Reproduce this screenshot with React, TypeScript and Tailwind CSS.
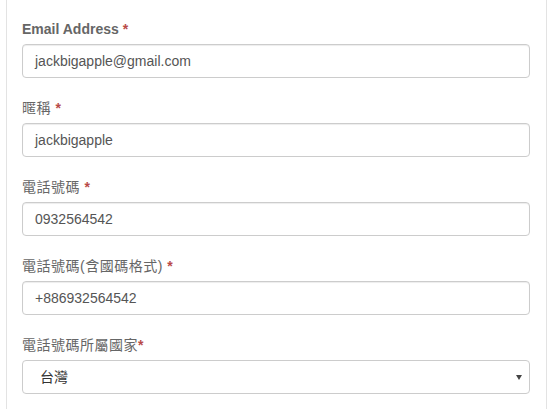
import React from "react";

const font = { fontFamily: '"Liberation Sans", Arial, "Noto Sans CJK TC", sans-serif' };

function Label({ text, bold, space = true }: { text: string; bold?: boolean; space?: boolean }) {
  return (
    <label
      className={`block h-[20px] leading-[20px] text-[14px] mb-[5px] text-[#666] ${bold ? "font-bold" : "font-normal tracking-[0.5px]"}`}
    >
      {text}
      {space ? " " : ""}
      <span className="text-[#b94a48] font-bold">*</span>
    </label>
  );
}

function Input({ value }: { value: string }) {
  return (
    <div className="h-[34px] w-[508px] border border-[#ccc] rounded-[4px] px-[12px] flex items-center text-[14px] text-[#555] bg-white shadow-[inset_0_1px_1px_rgba(0,0,0,0.075)]">
      {value}
    </div>
  );
}

export default function App() {
  return (
    <div className="w-[551px] h-[409px] bg-white overflow-hidden" style={font}>
      <div className="ml-[6px] w-[541px] h-full border-l border-r border-[#e3e3e3] pl-[15px] pt-[19px]">
        <div className="mb-[20px]">
          <Label text="Email Address" bold />
          <Input value="jackbigapple@gmail.com" />
        </div>
        <div className="mb-[20px]">
          <Label text="暱稱" />
          <Input value="jackbigapple" />
        </div>
        <div className="mb-[20px]">
          <Label text="電話號碼" />
          <Input value="0932564542" />
        </div>
        <div className="mb-[20px]">
          <Label text="電話號碼(含國碼格式)" />
          <Input value="+886932564542" />
        </div>
        <div>
          <Label text="電話號碼所屬國家" space={false} />
          <div className="h-[34px] w-[508px] border border-[#ccc] rounded-[4px] pl-[17px] pr-[6px] flex items-center justify-between text-[14px] text-[#333] bg-white">
            <span>台灣</span>
            <svg width="6" height="5" viewBox="0 0 6 5" className="mr-[1px]">
              <polygon points="0,0 6,0 3,5" fill="#444" />
            </svg>
          </div>
        </div>
      </div>
    </div>
  );
}
